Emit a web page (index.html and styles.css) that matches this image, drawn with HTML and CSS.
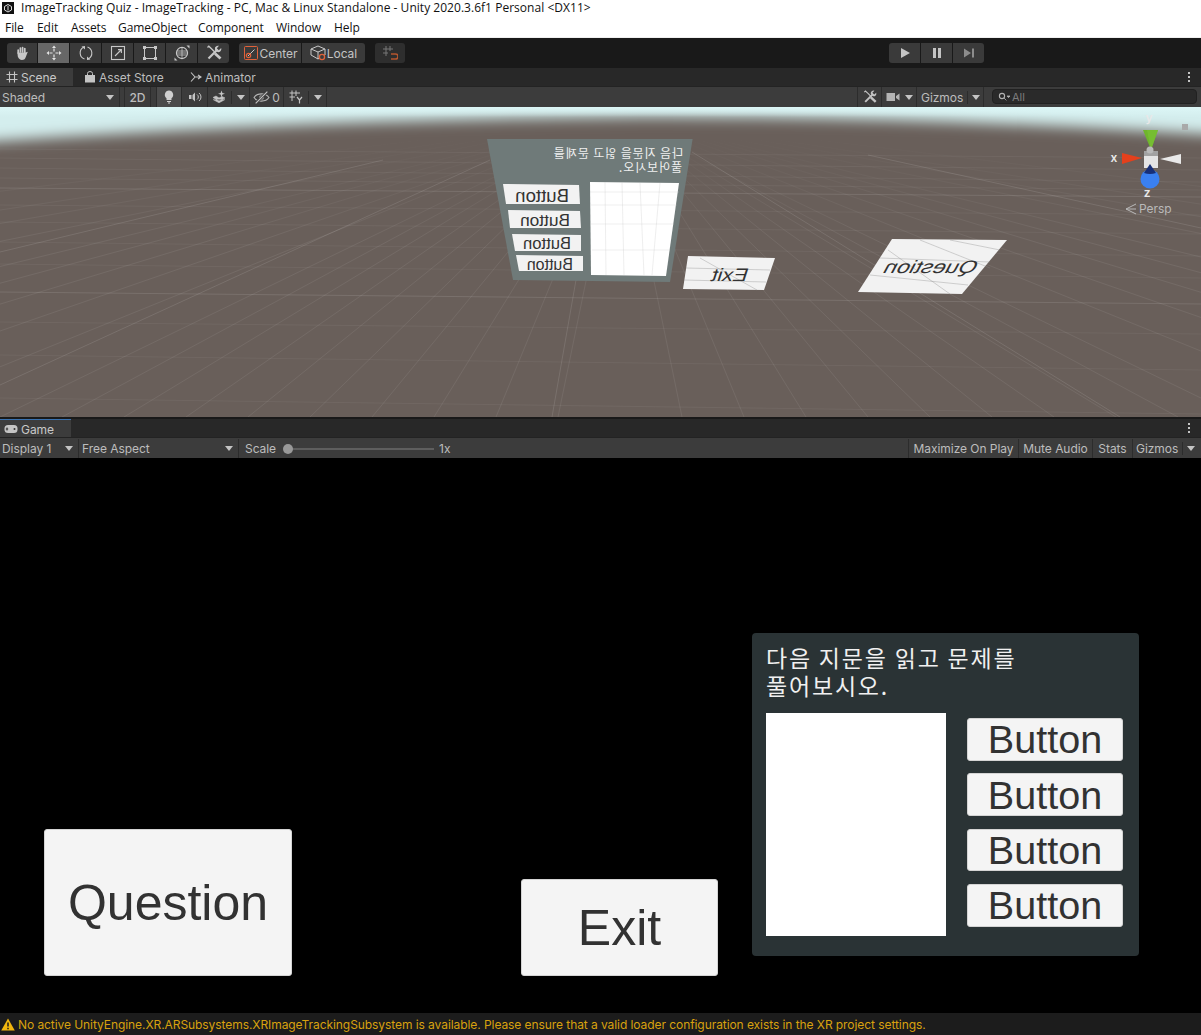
FILE: index.html
```html
<!DOCTYPE html>
<html lang="en">
  <head>
    <meta charset="UTF-8" />
    <title>ImageTracking Quiz - Unity</title>
    <link rel="stylesheet" href="styles.css">
  </head>
  <body>
    <svg class="defs">
      <symbol id="toolsIcon" viewBox="0 0 16 16">
        <path d="M1.5 2.5L2.8 1.2L6 4.2L9.5 7.8" stroke="currentColor" stroke-width="1.3" fill="none" />
        <path d="M9 8.5L14.5 13.5" stroke="currentColor" stroke-width="2.8" fill="none" />
        <path d="M2.5 13.5L10.5 5.5" stroke="currentColor" stroke-width="2.2" fill="none" />
        <path d="M9 2.5A3.6 3.6 0 0 1 13 0.8L10.8 3.2L12.8 5.2L15.2 3A3.6 3.6 0 0 1 13.4 7A3.6 3.6 0 0 1 9 2.5z" fill="currentColor" />
      </symbol>
    </svg>

    <!-- window title and menu -->
    <div class="title-bar">
      <svg class="unity-logo" viewBox="0 0 12 12"><rect width="12" height="12" fill="#111" /><path d="M6 2.5L9.5 4.5V8L6 10L2.5 8V4.5zM6 4V8.5" stroke="#ddd" fill="none" /></svg>
      <span>ImageTracking Quiz - ImageTracking - PC, Mac &amp; Linux Standalone - Unity 2020.3.6f1 Personal &lt;DX11&gt;</span>
    </div>
    <div class="menu-bar">
      <span class="menu-file">File</span>
      <span class="menu-edit">Edit</span>
      <span class="menu-assets">Assets</span>
      <span class="menu-go">GameObject</span>
      <span class="menu-comp">Component</span>
      <span class="menu-window">Window</span>
      <span>Help</span>
    </div>

    <!-- main toolbar -->
    <div class="main-toolbar">
      <div class="btn-group tools">
        <div class="tool tool-hand"><svg viewBox="0 0 16 16"><path d="M4.2 8V5M6.4 7V3M8.6 7V2.5M10.8 7.5V3.6" stroke="#c8c8c8" stroke-width="1.7" stroke-linecap="round" /><path d="M3.4 7.5H11.6L13.8 6.8L11.8 12C11 14.4 9.6 15 8 15C6 15 4.6 14 3.8 11.6z" fill="#c8c8c8" /></svg></div>
        <div class="tool active"><svg viewBox="0 0 16 16"><path d="M8 0.5L10 3H6zM8 15.5L10 13H6zM0.5 8L3 6V10zM15.5 8L13 6V10z" fill="#e4e4e4" /><path d="M8 3.5V6.5M8 9.5V12.5M3.5 8H6.5M9.5 8H12.5" stroke="#e4e4e4" stroke-width="1.2" /></svg></div>
        <div class="tool"><svg viewBox="0 0 16 16"><path d="M6.5 14A6.5 6.5 0 0 1 5.5 2.2M9.5 2A6.5 6.5 0 0 1 10.5 13.8" fill="none" stroke="#c8c8c8" stroke-width="1.1" /><path d="M3.5 1.5L7 1V4.5zM12.5 14.5L9 15V11.5z" fill="#c8c8c8" /></svg></div>
        <div class="tool"><svg viewBox="0 0 16 16"><rect x="1.5" y="1.5" width="13" height="13" fill="none" stroke="#c8c8c8" stroke-width="1.1" /><path d="M5 11L11 5M8 4.6H11.4V8" fill="none" stroke="#c8c8c8" stroke-width="1.1" /></svg></div>
        <div class="tool"><svg viewBox="0 0 16 16"><rect x="2.5" y="2.5" width="11" height="11" fill="none" stroke="#c8c8c8" /><path d="M1 1h3v3H1zM12 1h3v3h-3zM1 12h3v3H1zM12 12h3v3h-3z" fill="#c8c8c8" /></svg></div>
        <div class="tool"><svg viewBox="0 0 16 16"><circle cx="8" cy="8" r="5.6" fill="none" stroke="#c8c8c8" stroke-width="1.1" /><path d="M8 2.4V13.6M2.4 8H13.6M3 6H13M3 10H13" stroke="#c8c8c8" stroke-width="0.8" /><path d="M0.5 15.5V12.5L3.5 15.5zM15.5 0.5V3.5L12.5 0.5z" fill="#c8c8c8" /></svg></div>
        <div class="tool"><svg viewBox="0 0 16 16" color="#c8c8c8"><use href="#toolsIcon" /></svg></div>
      </div>
      <div class="btn-group pivot">
        <div class="tool pivot-center">
          <svg viewBox="0 0 16 16"><rect x="1.5" y="1.5" width="13" height="13" rx="1" fill="none" stroke="#e0623a" /><path d="M5 11L11.5 4.5" stroke="#c8c8c8" /><circle cx="5.5" cy="10.5" r="2.2" fill="none" stroke="#e0623a" stroke-width="1.2" /></svg>
          Center
        </div>
        <div class="tool pivot-local">
          <svg viewBox="0 0 16 16"><path d="M1 4L8 1L15 4V10L8 14L1 10zM1 4L8 7L15 4M8 7V14" fill="none" stroke="#c8c8c8" /><circle cx="12" cy="12" r="2.6" fill="#3c3c3c" stroke="#e0623a" stroke-width="1.3" /></svg>
          Local
        </div>
      </div>
      <div class="btn-group snap">
        <div class="tool snap-btn"><svg viewBox="0 0 16 16"><path d="M4 1V11M8 1V6M1 4H11M1 8H6" stroke="#777" /><path d="M9 9H13.5A2 2 0 0 1 13.5 14H9" fill="none" stroke="#b4552e" stroke-width="1.6" /></svg></div>
      </div>
      <div class="btn-group play">
        <div class="tool play-btn"><svg viewBox="0 0 12 12"><path d="M2 1L11 6L2 11z" fill="#c4c4c4" /></svg></div>
        <div class="tool play-btn"><svg viewBox="0 0 12 12"><path d="M2 1H5V11H2zM7 1H10V11H7z" fill="#c4c4c4" /></svg></div>
        <div class="tool play-btn"><svg viewBox="0 0 12 12"><path d="M1 1.5L8 6L1 10.5zM9 1.5H11V10.5H9z" fill="#8c8c8c" /></svg></div>
      </div>
    </div>

    <!-- scene window -->
    <div class="tab-bar">
      <div class="tab tab-on tab-scene">
        <svg viewBox="0 0 12 12"><path d="M3.5 0.5V11.5M8.5 0.5V11.5M0.5 3.5H11.5M0.5 8.5H11.5" stroke="#c4c4c4" stroke-width="1.1" /></svg>
        Scene
      </div>
      <div class="tab tab-store">
        <svg viewBox="0 0 12 12"><path d="M1 4H11V11.5H1z" fill="#c4c4c4" /><path d="M3.5 4V2.5A2.5 2 0 0 1 8.5 2.5V4" fill="none" stroke="#c4c4c4" /></svg>
        Asset Store
      </div>
      <div class="tab tab-anim">
        <svg viewBox="0 0 12 12"><path d="M1 1.5L5 6L1 10.5M5 6H10M8 4L11 6L8 8" fill="none" stroke="#c4c4c4" stroke-width="1.1" /></svg>
        Animator
      </div>
      <div class="kebab"><i></i><i></i><i></i></div>
    </div>
    <div class="sub-toolbar">
      <div class="drop shaded">Shaded<b class="arrow"></b></div>
      <div class="drop btn-2d">2D</div>
      <div class="drop icon-btn lit btn-light"><svg viewBox="0 0 12 14"><path d="M6 0.5A4.3 4.3 0 0 1 8.5 8.2V10H3.5V8.2A4.3 4.3 0 0 1 6 0.5zM4 11H8V12H4zM5 12.6H7V13.6H5z" fill="#d0d0d0" /></svg></div>
      <div class="drop icon-btn btn-audio"><svg viewBox="0 0 14 12"><path d="M1 4H3.5V8H1zM4.5 4L7 1.5V10.5L4.5 8z" fill="#c4c4c4" /><path d="M9 3.5A3 3 0 0 1 9 8.5M11 2A5 5 0 0 1 11 10" fill="none" stroke="#c4c4c4" /></svg></div>
      <div class="drop icon-btn btn-fx"><svg viewBox="0 0 14 14"><path d="M1 7.5L4 6L7 8L10 6.5L13 8L7 11zM1 9.5L7 12.8L13 9.5" fill="#c4c4c4" stroke="#c4c4c4" stroke-width="0.6" /><path d="M9.5 0.5L10.4 3L13 3.8L10.4 4.6L9.5 7.2L8.6 4.6L6 3.8L8.6 3z" fill="#c4c4c4" /></svg><b class="sep"></b><b class="arrow"></b></div>
      <div class="drop icon-btn btn-hidden"><svg viewBox="0 0 16 12"><path d="M1 6C4 1.5 12 1.5 15 6C12 10.5 4 10.5 1 6z" fill="none" stroke="#b4b4b4" stroke-width="1.1" /><circle cx="8" cy="6" r="2.2" fill="#b4b4b4" /><path d="M2.5 11.5L13.5 0.5" stroke="#3c3c3c" stroke-width="2.6" /><path d="M2.5 11.5L13.5 0.5" stroke="#c4c4c4" stroke-width="1.1" /></svg><span>0</span></div>
      <div class="drop icon-btn btn-grid"><svg viewBox="0 0 14 14"><path d="M3 0.5V11M7 0.5V6M0.5 3H11M0.5 7H6" stroke="#c4c4c4" /><path d="M8 7L10.5 10L13 7M10.5 10V13.5" fill="none" stroke="#c4c4c4" stroke-width="1.2" /></svg><b class="sep"></b><b class="arrow"></b></div>
      <div class="drop icon-btn btn-tools"><svg viewBox="0 0 16 16" color="#c4c4c4"><use href="#toolsIcon" /></svg></div>
      <div class="drop icon-btn btn-cam"><svg viewBox="0 0 14 10"><path d="M0.5 1H9V9H0.5zM10 4L13.5 1.5V8.5L10 6z" fill="#b4b4b4" /></svg><b class="arrow"></b></div>
      <div class="drop btn-gizmos">Gizmos<b class="sep"></b><b class="arrow"></b></div>
      <div class="search">
        <svg viewBox="0 0 12 10"><circle cx="4" cy="4" r="2.6" fill="none" stroke="#b4b4b4" stroke-width="1.1" /><path d="M6 6L8.4 8.4M9 4H12L10.5 5.6z" stroke="#b4b4b4" fill="#b4b4b4" stroke-width="0.8" /></svg>
        All
      </div>
    </div>

    <svg class="scene" viewBox="0 107 1201 310">
      <defs>
        <filter id="skyBlur" x="-5%" y="-50%" width="110%" height="200%"><feGaussianBlur stdDeviation="0 7" /></filter>
        <linearGradient id="gridMinor" gradientUnits="userSpaceOnUse" x1="0" y1="135" x2="0" y2="240">
          <stop offset="0" stop-color="#ffffff" stop-opacity="0" />
          <stop offset="1" stop-color="#ffffff" stop-opacity="0.07" />
        </linearGradient>
        <linearGradient id="skyTop" x1="0" y1="0" x2="0" y2="1">
          <stop offset="0" stop-color="#dcf6f6" />
          <stop offset="1" stop-color="#dcf6f6" stop-opacity="0" />
        </linearGradient>
      </defs>
      <rect x="0" y="107" width="1201" height="310" fill="#695f5a" />

      <!-- grid -->
      <path class="grid-minor" d="M620 116l62 301M620 116l-62 301M620 116l124 301M620 116l-124 301M620 116l186 301M620 116l-186 301M620 116l248 301M620 116l-248 301M620 116l310 301M620 116l-310 301M620 116l372 301M620 116l-372 301M620 116l434 301M620 116l-434 301M620 116l496 301M620 116l-496 301M620 116l558 301M620 116l-558 301M620 116l620 301M620 116l-620 301M620 116l744 301M620 116l-744 301M620 116l868 301M620 116l-868 301M620 116l992 301M620 116l-992 301M620 116l1116 301M620 116l-1116 301M620 116l1240 301M620 116l-1240 301M620 116l1488 301M620 116l-1488 301M620 116l1736 301M620 116l-1736 301M620 116l1984 301M620 116l-1984 301M620 116l2480 301M620 116l-2480 301" />
      <path class="grid-flat" d="M0 149L1201 158M0 158L1201 170M0 168L1201 182M0 178L1201 190M0 205L1201 215M0 222L1201 234M0 242L1201 256M0 264L1201 278M0 322L1201 334M0 355L1201 370M0 398L1201 414" />
      <path class="grid-major" d="M0 188L1201 197M0 292L1201 304M0 385L490 160M0 252L383 160M692 152L1120 417M868 155L1201 228M552 417L590 200" />

      <!-- sky -->
      <path d="M0 90H1201V134Q900 116 640 117Q300 120 0 141z" fill="#d4eeee" filter="url(#skyBlur)" />
      <rect x="0" y="107" width="1201" height="10" fill="url(#skyTop)" />

      <!-- question panel seen from behind -->
      <path d="M487 139H692.6L670 282L513 280z" fill="#6f7a79" />
      <path d="M590 182L679 183L666 276L591 275z" fill="#ffffff" />
      <path class="over-white" d="M590 192H679M591 205H677M591 224H674M592 250H670M605 182L606 275M622 182L624 275M640 183L644 275M660 183L652 275" />
      <text class="mirror-ko" transform="translate(683 158) scale(-1 1)">다음 지문을 읽고 문제를</text>
      <text class="mirror-ko" transform="translate(682 172) scale(-1 1)">풀어보시오.</text>

      <path class="plane" d="M503 184L579 185L580 204L506 204z" />
      <path class="plane" d="M508 210L580 211L581 228L510 228z" />
      <path class="plane" d="M512 234L581 235L581 251L515 251z" />
      <path class="plane" d="M516 255L583 256L583 271L519 271z" />
      <text class="mirror-en" font-size="18.6" transform="translate(569 202) scale(-1 1)">Button</text>
      <text class="mirror-en" font-size="17.3" transform="translate(570 226) scale(-1 1)">Button</text>
      <text class="mirror-en" font-size="16.6" transform="translate(571 249) scale(-1 1)">Button</text>
      <text class="mirror-en" font-size="16" transform="translate(573 270) scale(-1 1)">Button</text>

      <!-- exit and question planes -->
      <path class="plane" d="M688 256L775 258L764 290L683 289z" />
      <path class="over-plane" d="M700 258L757 290M684 280L766 282M686 268L770 270" />
      <text class="mirror-en" font-size="18" transform="translate(746 281) skewX(-18) scale(-1.2 1)">Exit</text>
      <path class="plane" d="M892 239L1007 240L962 294L858 292z" />
      <path class="over-plane" d="M888 250L950 294M920 240L990 268M950 240L1000 250M870 275L968 285M880 258L990 262" />
      <text class="mirror-en" font-size="18" transform="translate(974 273) skewX(-28) scale(-1.28 1)">Question</text>

      <!-- scene gizmo -->
      <rect x="1182" y="124" width="6" height="6" fill="#a9a9a9" />
      <path d="M1143 130H1158L1151 150z" fill="#6fb52c" />
      <path d="M1147 130H1158L1151 150z" fill="#7cc437" opacity="0.6" />
      <path d="M1144 151H1158V157H1144z" fill="#a2a2a2" />
      <circle cx="1150" cy="150" r="3.5" fill="#b9b9b9" />
      <rect x="1144" y="156" width="14" height="12" fill="#e4e4e4" />
      <path d="M1142 158L1122 153V164z" fill="#e4401c" />
      <path d="M1160 159L1181 154V164z" fill="#e9e9e9" />
      <circle cx="1150" cy="179" r="9.5" fill="#3a80f0" />
      <path d="M1150 164L1144 173Q1150 175 1156 173z" fill="#172f78" />
      <text class="axis" x="1149" y="122" text-anchor="middle">y</text>
      <text class="axis" x="1114" y="162" text-anchor="middle">x</text>
      <text class="axis" x="1147" y="197" text-anchor="middle">z</text>
      <path d="M1136 204L1126 209L1136 214M1126 209H1136" fill="none" stroke="#b9b9b9" />
      <text class="persp" x="1139" y="213">Persp</text>
    </svg>

    <!-- game window -->
    <div class="pane-gap"></div>
    <div class="tab-bar game-tabs">
      <div class="tab tab-on tab-game">
        <svg viewBox="0 0 14 10"><rect x="0.5" y="1" width="13" height="8" rx="3.5" fill="#c4c4c4" /><path d="M3 3.5V6.5M1.8 5H4.2" stroke="#333" /><circle cx="10.5" cy="5" r="1" fill="#333" /></svg>
        Game
      </div>
      <div class="kebab"><i></i><i></i><i></i></div>
    </div>
    <div class="sub-toolbar game-toolbar">
      <div class="drop display">Display 1<b class="arrow"></b></div>
      <div class="drop aspect">Free Aspect<b class="arrow"></b></div>
      <div class="scale">
        <span>Scale</span>
        <div class="slider"><b></b></div>
        <span>1x</span>
      </div>
      <div class="drop maximize">Maximize On Play</div>
      <div class="drop mute">Mute Audio</div>
      <div class="drop stats">Stats</div>
      <div class="drop game-gizmos">Gizmos<b class="sep"></b><b class="arrow"></b></div>
    </div>

    <div class="game-view">
      <div class="ui-btn question-btn">Question</div>
      <div class="ui-btn exit-btn">Exit</div>
      <div class="quiz-panel">
        <div class="quiz-title">다음 지문을 읽고 문제를<br />풀어보시오.</div>
        <div class="quiz-body">
          <div class="quiz-image"></div>
          <div class="quiz-answers">
            <div class="ui-btn answer-btn">Button</div>
            <div class="ui-btn answer-btn">Button</div>
            <div class="ui-btn answer-btn">Button</div>
            <div class="ui-btn answer-btn">Button</div>
          </div>
        </div>
      </div>
    </div>

    <div class="status-bar">
      <svg viewBox="0 0 14 13"><path d="M7 0.5L13.8 12.5H0.2z" fill="#f1b70e" /><path d="M7 4.5V8.5M7 9.8V11.2" stroke="#1c1c1c" stroke-width="1.5" /></svg>
      No active UnityEngine.XR.ARSubsystems.XRImageTrackingSubsystem is available. Please ensure that a valid loader configuration exists in the XR project settings.
    </div>
  </body>
</html>
```

FILE: styles.css
```css
* {
  box-sizing: border-box;
}
html,
body {
  margin: 0;
  padding: 0;
}
body {
  width: 1201px;
  height: 1035px;
  overflow: hidden;
  display: flex;
  flex-direction: column;
  background-color: #000000;
  font-family: Inter, "Noto Sans", sans-serif;
  font-size: 12px;
  letter-spacing: -0.05px;
  color: #c4c4c4;
}
.defs {
  display: none;
}

/* title and menu */
.title-bar {
  height: 17px;
  flex: none;
  display: flex;
  align-items: center;
  padding: 0 0 2px 2px;
  gap: 7px;
  background-color: #ffffff;
  color: #111111;
  font-family: "Open Sans", sans-serif;
  font-size: 12px;
  letter-spacing: 0.03px;
}
.unity-logo {
  width: 12px;
  height: 12px;
}
.menu-bar {
  height: 21px;
  flex: none;
  display: flex;
  align-items: center;
  padding: 0 0 0 5px;
  background-color: #ffffff;
  border-bottom: 1px solid #f0f0f0;
  color: #111111;
  font-family: "Open Sans", sans-serif;
  font-size: 12px;
  letter-spacing: -0.05px;
}
.menu-bar span {
  flex: none;
}
.menu-file { width: 32px; }
.menu-edit { width: 34px; }
.menu-assets { width: 47px; }
.menu-go { width: 80px; }
.menu-comp { width: 78px; }
.menu-window { width: 58px; }

/* main toolbar */
.main-toolbar {
  height: 30px;
  flex: none;
  display: flex;
  align-items: center;
  padding-left: 7px;
  background-color: #191919;
}
.btn-group {
  display: flex;
  gap: 1px;
  height: 20px;
  border-radius: 3px;
  overflow: hidden;
}
.tool {
  height: 20px;
  width: 31px;
  flex: none;
  display: flex;
  align-items: center;
  justify-content: center;
  background-color: #3a3a3a;
}
.tool svg {
  width: 16px;
  height: 16px;
}
.tool-hand {
  width: 30px;
}
.tool.active {
  background-color: #676767;
}
.pivot {
  margin-left: 10px;
}
.pivot-center {
  width: 62px;
  gap: 1px;
  font-size: 12px;
}
.pivot-local {
  width: 63px;
  gap: 1px;
}
.snap {
  margin-left: 10px;
}
.snap-btn {
  width: 30px;
  background-color: #2e2e2e;
}
.play {
  margin-left: 484px;
}
.play-btn svg {
  width: 12px;
  height: 12px;
}

/* tabs */
.tab-bar {
  height: 19px;
  flex: none;
  display: flex;
  align-items: stretch;
  background-color: #282828;
  border-bottom: 1px solid #232323;
}
.tab {
  display: flex;
  align-items: center;
  gap: 5px;
  font-size: 12px;
  color: #bdbdbd;
}
.tab svg {
  width: 12px;
  height: 12px;
}
.tab-on {
  background-color: #3c3c3c;
  color: #c8c8c8;
}
.tab-scene {
  width: 73px;
  padding-left: 6px;
  gap: 3px;
}
.tab-store {
  width: 106px;
  padding-left: 11px;
  gap: 3px;
}
.tab-anim {
  padding-left: 11px;
  gap: 3px;
}
.kebab {
  margin-left: auto;
  width: 24px;
  display: flex;
  flex-direction: column;
  align-items: center;
  justify-content: center;
  gap: 2px;
}
.kebab i {
  width: 2px;
  height: 2px;
  background-color: #c4c4c4;
}

/* toolbars under the tabs */
.sub-toolbar {
  height: 20px;
  flex: none;
  display: flex;
  align-items: stretch;
  background-color: #3c3c3c;
}
.game-toolbar {
  padding-top: 1px;
}
.drop {
  display: flex;
  align-items: center;
  flex: none;
  border-right: 1px solid #2c2c2c;
  color: #bcbcbc;
}
.arrow {
  width: 0;
  height: 0;
  border-left: 4px solid transparent;
  border-right: 4px solid transparent;
  border-top: 5px solid #c4c4c4;
}
.sep {
  width: 1px;
  height: 13px;
  background-color: #2c2c2c;
}
.shaded {
  width: 120px;
  padding-left: 2px;
  justify-content: space-between;
  padding-right: 5px;
  margin-right: 4px;
}
.btn-2d {
  width: 27px;
  justify-content: center;
  margin-right: 5px;
  border-left: 1px solid #2c2c2c;
  font-weight: 500;
}
.icon-btn {
  justify-content: center;
  gap: 5px;
}
.icon-btn svg {
  width: 14px;
  height: 14px;
}
.lit {
  background-color: #4b4b4b;
}
.btn-light {
  width: 26px;
  border-left: 1px solid #2c2c2c;
}
.btn-audio {
  width: 26px;
}
.btn-fx {
  width: 42px;
}
.btn-hidden {
  width: 34px;
  gap: 2px;
}
.icon-btn.btn-hidden svg {
  width: 17px;
  height: 13px;
}
.btn-grid {
  width: 43px;
  margin-right: 530px;
}
.btn-tools {
  width: 25px;
  border-left: 1px solid #2c2c2c;
}
.btn-cam {
  width: 35px;
}
.btn-gizmos {
  width: 67px;
  padding-left: 4px;
  gap: 4px;
}
.search {
  width: 205px;
  height: 15px;
  margin: 2px 0 0 8px;
  padding-left: 5px;
  display: flex;
  align-items: center;
  gap: 2px;
  flex: none;
  background-color: #2a2a2a;
  border: 1px solid #212121;
  border-radius: 4px;
  font-size: 11px;
  color: #7c7c7c;
}
.search svg {
  width: 12px;
  height: 10px;
}

/* scene view */
.scene {
  display: block;
  width: 1201px;
  height: 310px;
  flex: none;
}
.grid-minor {
  fill: none;
  stroke: url(#gridMinor);
}
.grid-flat {
  fill: none;
  stroke: #ffffff;
  stroke-opacity: 0.05;
}
.grid-major {
  fill: none;
  stroke: #ffffff;
  stroke-opacity: 0.11;
}
.plane {
  fill: #f2f2f2;
}
.over-white {
  fill: none;
  stroke: #c8c8c8;
  stroke-opacity: 0.3;
}
.over-plane {
  fill: none;
  stroke: #888888;
  stroke-opacity: 0.35;
}
.mirror-ko {
  font-family: "Noto Sans CJK KR", sans-serif;
  font-size: 12px;
  letter-spacing: 0.9px;
  fill: #f0f0f0;
}
.mirror-en {
  font-family: "Liberation Sans", sans-serif;
  letter-spacing: 0;
  fill: #333333;
}
.axis {
  font-family: Inter, sans-serif;
  font-size: 12px;
  font-weight: 600;
  fill: #e8e8e8;
}
.persp {
  font-family: Inter, sans-serif;
  font-size: 12px;
  fill: #b9b9b9;
}

/* game window */
.pane-gap {
  height: 2px;
  flex: none;
  background-color: #191919;
}
.game-tabs .tab-on {
  border-top: 1px solid #3a72b0;
  padding-top: 1px;
}
.tab-game {
  width: 71px;
  padding-left: 4px;
  gap: 3px;
}
.tab-game svg {
  width: 14px;
  height: 10px;
}
.display {
  width: 79px;
  padding: 0 5px 0 2px;
  justify-content: space-between;
}
.aspect {
  width: 160px;
  padding: 0 5px 0 3px;
  justify-content: space-between;
}
.scale {
  width: 670px;
  display: flex;
  align-items: center;
  padding-left: 6px;
  border-right: 1px solid #2c2c2c;
  color: #bcbcbc;
}
.slider {
  width: 150px;
  height: 2px;
  margin: 0 5px 0 8px;
  position: relative;
  background-color: #5e5e5e;
}
.slider b {
  position: absolute;
  left: -1px;
  top: -4px;
  width: 10px;
  height: 10px;
  border-radius: 50%;
  background-color: #999999;
}
.maximize {
  width: 110px;
  justify-content: center;
}
.mute {
  width: 74px;
  justify-content: center;
}
.stats {
  width: 40px;
  justify-content: center;
}
.game-gizmos {
  width: 68px;
  padding-left: 3px;
  gap: 4px;
  border-right: none;
}
.game-view {
  flex: 1;
  display: flex;
  align-items: flex-end;
  padding: 0 0 37px 44px;
  background-color: #000000;
}
.ui-btn {
  display: flex;
  align-items: center;
  justify-content: center;
  flex: none;
  background-color: #f4f4f4;
  border: 1px solid #d4d4d4;
  border-radius: 3px;
  color: #323232;
  font-family: "Liberation Sans", sans-serif;
  letter-spacing: 0;
}
.question-btn {
  width: 248px;
  height: 147px;
  margin-right: 229px;
  font-size: 50px;
}
.exit-btn {
  width: 197px;
  height: 97px;
  margin-right: 34px;
  font-size: 50px;
}
.quiz-panel {
  width: 387px;
  height: 323px;
  margin-bottom: 20px;
  padding: 10px 16px 0 14px;
  flex: none;
  background-color: #2a3335;
  border-radius: 4px;
}
.quiz-title {
  height: 70px;
  font-family: "Noto Sans CJK KR", sans-serif;
  font-size: 23px;
  letter-spacing: 1.8px;
  line-height: 28px;
  color: #f0f0f0;
}
.quiz-body {
  display: flex;
  gap: 21px;
}
.quiz-image {
  width: 180px;
  height: 223px;
  flex: none;
  background-color: #ffffff;
}
.quiz-answers {
  flex: 1;
  display: flex;
  flex-direction: column;
  gap: 12.67px;
  padding-top: 5px;
}
.answer-btn {
  height: 42.67px;
  padding-top: 1px;
  font-size: 39.6px;
}

/* status bar */
.status-bar {
  height: 22px;
  flex: none;
  display: flex;
  align-items: center;
  gap: 3px;
  padding-left: 1px;
  background-color: #1c1c1c;
  color: #d8a10e;
  font-size: 12px;
  letter-spacing: -0.07px;
}
.status-bar svg {
  width: 14px;
  height: 13px;
}
```
